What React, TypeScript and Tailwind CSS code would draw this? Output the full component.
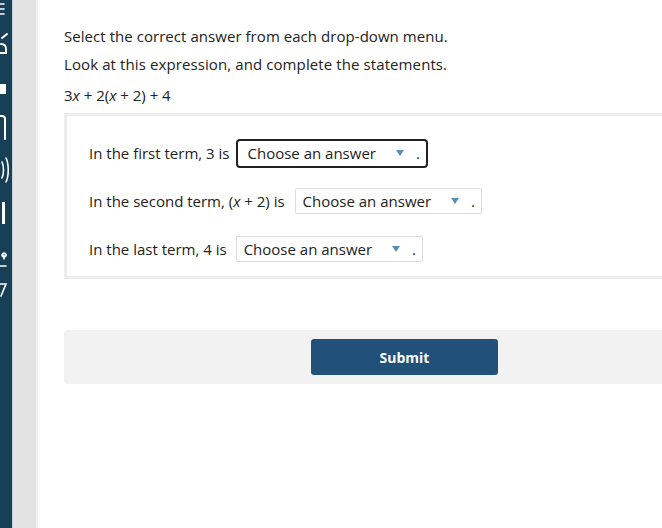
import { ReactNode } from "react";

const SideIcons = () => (
  <svg width="12" height="528" viewBox="0 0 12 528" fill="none" stroke="#fff" strokeWidth="2" strokeLinecap="round">
    <path d="M0 4h4M0 9h4M0 14h4" strokeWidth="1.6" />
    <path d="M2 38l5-4M1 44c3 0 5 2 5 5v4H0" />
    <rect x="-2" y="84" width="8" height="10" fill="#fff" stroke="none" />
    <path d="M-2 116h4c2 0 3 1 3 3v20" />
    <path d="M2 162c2 4 2 12 0 16M6 158c3 6 3 18 0 24" strokeWidth="1.6" />
    <rect x="2" y="202" width="3" height="22" fill="#fff" stroke="none" />
    <path d="M4 253a2 2 0 1 0 0.1 0M4 255v4M-2 266h8" strokeWidth="1.6" />
    <path d="M-2 284h8l-5 12" strokeWidth="1.6" />
  </svg>
);

const X = () => <i>x</i>;

const Caret = () => (
  <svg width="8" height="6" viewBox="0 0 8 6" className="ml-[20px]">
    <path d="M0 0h8L4 6z" fill="#5b8db5" />
  </svg>
);

function Dropdown({ focused }: { focused?: boolean }) {
  return (
    <span
      className={
        focused
          ? "inline-flex items-center h-[29px] pl-[9px] pr-[6px] border-2 border-[#222] rounded-[4px] bg-white"
          : "inline-flex items-center h-[26px] pl-[7px] pr-[6px] border border-[#dcdcdc] rounded-[2px] bg-white"
      }
    >
      <span className="text-[#222]">Choose an answer</span>
      <Caret />
      <span className="ml-[12px] text-[#222]">.</span>
    </span>
  );
}

function Row({ children }: { children: ReactNode }) {
  return <div className="flex items-center h-[28px] whitespace-nowrap">{children}</div>;
}

export default function App() {
  return (
    <div
      className="flex h-[528px] w-[662px] overflow-hidden bg-white text-[15px] text-[#222]"
      style={{ fontFamily: '"Open Sans", "Liberation Sans", sans-serif' }}
    >
      <div className="w-[12px] shrink-0 bg-[#173f55]">
        <SideIcons />
      </div>
      <div className="w-[26px] shrink-0 bg-[#e3e3e3] border-l border-[#c9d3da] border-r-2 border-r-[#f0f0f0]" />
      <div className="flex-1 min-w-0 pl-[26px] pt-[25px]">
        <p className="h-[22px] leading-[22px] tracking-[0.05px]">Select the correct answer from each drop-down menu.</p>
        <p className="mt-[6px] h-[22px] leading-[22px] tracking-[0.1px]">Look at this expression, and complete the statements.</p>
        <p className="mt-[9px] h-[22px] leading-[22px]">
          3<X /> + 2(<X /> + 2) + 4
        </p>
        <div className="mt-[7px] w-[620px] h-[166px] border-[3px] border-[#ececec] pl-[22px] pt-[23px] flex flex-col gap-[20px]">
          <Row>
            <span className="mr-[7px]">In the first term, 3 is</span>
            <Dropdown focused />
          </Row>
          <Row>
            <span className="mr-[10px]">
              In the second term, (<X /> + 2) is
            </span>
            <Dropdown />
          </Row>
          <Row>
            <span className="mr-[9px]">In the last term, 4 is</span>
            <Dropdown />
          </Row>
        </div>
        <div className="mt-[51px] w-[620px] h-[54px] bg-[#f2f2f2] rounded-l-[4px] flex items-center pl-[247px]">
          <button className="w-[187px] h-[36px] rounded-[3px] bg-[#21507b] text-white text-[14px] font-bold">
            Submit
          </button>
        </div>
      </div>
    </div>
  );
}
